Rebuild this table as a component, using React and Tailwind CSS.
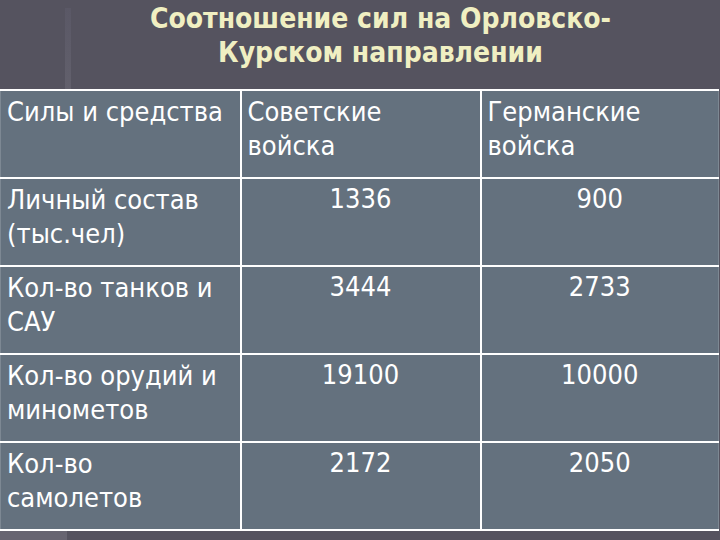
import React from "react";

const rows = [
  [["Личный состав", "(тыс.чел)"], "1336", "900"],
  [["Кол-во танков и", "САУ"], "3444", "2733"],
  [["Кол-во орудий и", "минометов"], "19100", "10000"],
  [["Кол-во", "самолетов"], "2172", "2050"],
];

export default function App() {
  const font = { fontFamily: '"DejaVu Sans Condensed", "DejaVu Sans", sans-serif' };
  return (
    <div className="w-[720px] h-[540px] bg-[#55535f] flex flex-col overflow-hidden" style={font}>
      <div className="h-[89px] flex">
        <div className="w-[65px]" />
        <div className="w-[6px] mt-[8px] bg-gradient-to-b from-[#5a5866] to-[#62606c]" />
        <div className="flex-1 flex flex-col items-center pr-[30px] pt-[2px] text-[#f0efc2] font-bold text-[28px] leading-[34px]">
          <div>Соотношение сил на Орловско-</div>
          <div>Курском направлении</div>
        </div>
      </div>
      <table className="w-[718px] border-collapse table-fixed text-white text-[27px] leading-[34px]">
        <colgroup>
          <col className="w-[240px]" />
          <col className="w-[240px]" />
          <col className="w-[238px]" />
        </colgroup>
        <tbody>
          <tr className="h-[88px] bg-[#64717e]">
            <td className="align-top border-t-2 border-t-white border-l border-l-[#7d8893] border-r-2 border-r-white border-b-2 border-b-white px-[6px] pt-[4px] whitespace-nowrap">Силы и средства</td>
            <td className="align-top border-t-2 border-t-white border-r-2 border-r-white border-b-2 border-b-white px-[6px] pt-[4px]">Советские<br />войска</td>
            <td className="align-top border-t-2 border-t-white border-r border-r-[#7d8893] border-b-2 border-b-white px-[6px] pt-[4px]">Германские<br />войска</td>
          </tr>
          {rows.map((r, i) => (
            <tr key={i} className="h-[88px] bg-[#64717e]">
              <td className="align-top border-l border-l-[#7d8893] border-r-2 border-r-white border-b-2 border-b-white px-[6px] pt-[4px] whitespace-nowrap">{r[0][0]}<br />{r[0][1]}</td>
              <td className="align-top text-center border-r-2 border-r-white border-b-2 border-b-white px-[6px] pt-[3px]">{r[1]}</td>
              <td className="align-top text-center border-r border-r-[#7d8893] border-b-2 border-b-white px-[6px] pt-[3px]">{r[2]}</td>
            </tr>
          ))}
        </tbody>
      </table>
      <div className="flex-1 flex">
        <div className="w-[67px] bg-[#676571]" />
        <div className="flex-1 bg-[#55535f]" />
      </div>
    </div>
  );
}
